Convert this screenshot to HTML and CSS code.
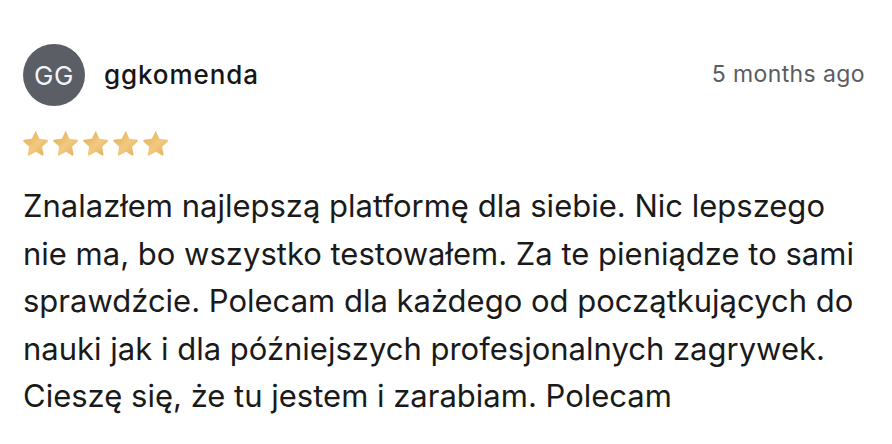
FILE: index.html
```html
<!DOCTYPE html>
<html lang="pl">
<head>
    <meta charset="UTF-8">
    <meta name="viewport" content="width=device-width, initial-scale=1.0">
    <title>Opinia</title>
    <link rel="stylesheet" href="styles.css">
</head>
<body>
    <div class="review">
        <div class="review-head">
            <div class="avatar">GG</div>
            <div class="author">ggkomenda</div>
            <div class="date">5 months ago</div>
        </div>
        <div class="stars">
            <svg class="star" viewBox="0 0 24 24"><defs><linearGradient id="gold" x1="0" y1="0" x2="1" y2="1"><stop offset="0" stop-color="#e3a94f"/><stop offset="0.55" stop-color="#f1ca80"/><stop offset="1" stop-color="#e2aa55"/></linearGradient></defs><path d="M12 1.5l3.2 6.6 7.1 1c.7.1 1 .9.5 1.4l-5.2 5 1.3 7.1c.1.7-.6 1.2-1.2.9L12 20.1l-6.4 3.4c-.6.3-1.3-.2-1.2-.9l1.3-7.1-5.2-5c-.5-.5-.2-1.3.5-1.4l7.1-1L11.3 1.5c.3-.6 1.1-.6 1.4 0z" fill="url(#gold)"/></svg>
            <svg class="star" viewBox="0 0 24 24"><path d="M12 1.5l3.2 6.6 7.1 1c.7.1 1 .9.5 1.4l-5.2 5 1.3 7.1c.1.7-.6 1.2-1.2.9L12 20.1l-6.4 3.4c-.6.3-1.3-.2-1.2-.9l1.3-7.1-5.2-5c-.5-.5-.2-1.3.5-1.4l7.1-1L11.3 1.5c.3-.6 1.1-.6 1.4 0z" fill="url(#gold)"/></svg>
            <svg class="star" viewBox="0 0 24 24"><path d="M12 1.5l3.2 6.6 7.1 1c.7.1 1 .9.5 1.4l-5.2 5 1.3 7.1c.1.7-.6 1.2-1.2.9L12 20.1l-6.4 3.4c-.6.3-1.3-.2-1.2-.9l1.3-7.1-5.2-5c-.5-.5-.2-1.3.5-1.4l7.1-1L11.3 1.5c.3-.6 1.1-.6 1.4 0z" fill="url(#gold)"/></svg>
            <svg class="star" viewBox="0 0 24 24"><path d="M12 1.5l3.2 6.6 7.1 1c.7.1 1 .9.5 1.4l-5.2 5 1.3 7.1c.1.7-.6 1.2-1.2.9L12 20.1l-6.4 3.4c-.6.3-1.3-.2-1.2-.9l1.3-7.1-5.2-5c-.5-.5-.2-1.3.5-1.4l7.1-1L11.3 1.5c.3-.6 1.1-.6 1.4 0z" fill="url(#gold)"/></svg>
            <svg class="star" viewBox="0 0 24 24"><path d="M12 1.5l3.2 6.6 7.1 1c.7.1 1 .9.5 1.4l-5.2 5 1.3 7.1c.1.7-.6 1.2-1.2.9L12 20.1l-6.4 3.4c-.6.3-1.3-.2-1.2-.9l1.3-7.1-5.2-5c-.5-.5-.2-1.3.5-1.4l7.1-1L11.3 1.5c.3-.6 1.1-.6 1.4 0z" fill="url(#gold)"/></svg>
        </div>
        <p class="text">Znalazłem najlepszą platformę dla siebie. Nic lepszego nie ma, bo wszystko testowałem. Za te pieniądze to sami sprawdźcie. Polecam dla każdego od początkujących do nauki jak i dla późniejszych profesjonalnych zagrywek. Cieszę się, że tu jestem i zarabiam. Polecam</p>
    </div>
</body>
</html>
```

FILE: styles.css
```css
body {
    margin: 0;
    background-color: #ffffff;
    font-family: Inter, "Noto Sans", sans-serif;
    color: #1c1c1e;
}
.review {
    padding: 44px 27px 0 23px;
}
.review-head {
    display: flex;
    align-items: center;
}
.avatar {
    width: 62px;
    height: 62px;
    border-radius: 50%;
    background-color: #5b5e65;
    color: #f4f4f6;
    font-size: 26px;
    letter-spacing: 0.5px;
    display: flex;
    align-items: center;
    justify-content: center;
}
.author {
    margin-left: 19px;
    font-size: 26px;
    font-weight: 500;
    letter-spacing: 0.9px;
    color: #161616;
    flex: 1;
    margin-top: -2px;
}
.date {
    font-size: 23px;
    letter-spacing: 0.4px;
    color: #5c5c60;
    margin-top: -3px;
}
.stars {
    display: flex;
    gap: 4px;
    margin-top: 24px;
}
.star {
    width: 26px;
    height: 26px;
}
.text {
    margin: 26px 0 0;
    font-size: 31px;
    line-height: 47.5px;
    color: #1a1a1a;
}
```
